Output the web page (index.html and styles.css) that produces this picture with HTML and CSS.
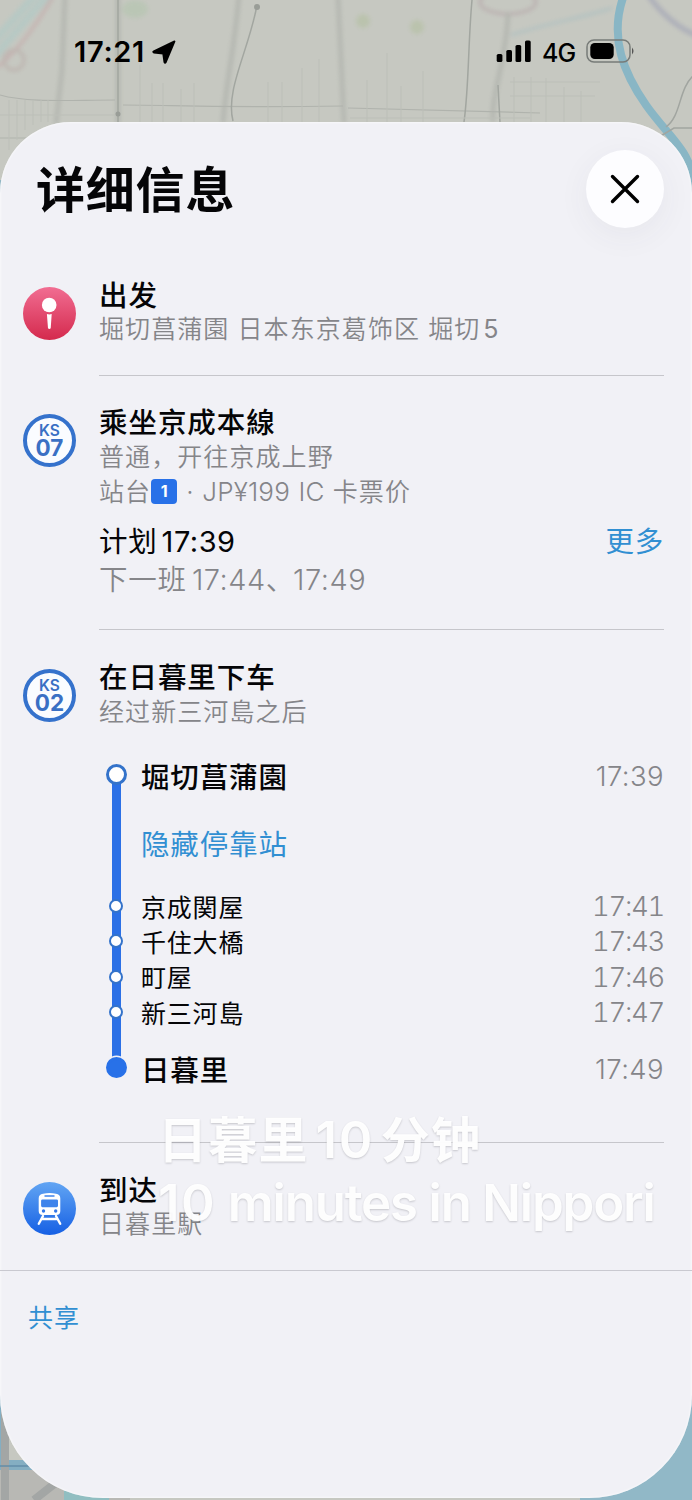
FILE: index.html
```html
<!DOCTYPE html>
<html lang="zh-CN">
<head>
<meta charset="utf-8">
<meta name="viewport" content="width=device-width">
<title>详细信息</title>
<link rel="stylesheet" href="styles.css">
</head>
<body>
<main class="phone">
  <svg class="map" viewBox="0 0 692 1500" fill="none" aria-hidden="true">
    <rect width="692" height="1500" fill="#c6c8c1"/>
    <g class="soft">
      <path d="M-5 40 40-10M-5 56 48-5" stroke="#b4c9c5" stroke-width="8"/>
      <path d="M-4 68C18 52 37 24 54-5" stroke="#c5abab" stroke-width="3"/>
      <circle cx="14" cy="60" r="10" stroke="#bbb0ac" stroke-width="3"/>
      <ellipse cx="135" cy="9" rx="13" ry="9" fill="#b8c6b3"/>
      <circle cx="363" cy="21" r="7" fill="#b8c2a9"/><circle cx="417" cy="27" r="7" fill="#b8c2a9"/>
      <ellipse cx="508" cy="2" rx="28" ry="12" stroke="#b7a9ab" stroke-width="3"/>
      <path d="M511 35C545 24 585 17 612 8" stroke="#aec0c1" stroke-width="3"/>
      <path d="M648-5C661 13 677 28 698 36" stroke="#a6a8b7" stroke-width="5"/>
      <path d="M65-5 62 70 56 124M118-5v129M239-5C235 45 225 90 223 123M338-5 344 123M508 13c-1 45-17 80-15 109" stroke="#adb0aa" stroke-width="4"/>
    </g>
    <path d="M0 95c28 8 70 5 115 5m8 5c50 0 90 3 220 1m5 2 192 5M0 138h35" stroke="#b0b3ad" stroke-width="1.2"/>
    <path d="M118 0v122M257 5C249 50 225 90 233 121M472 0C468 44 469 86 464 122M498 85l2 38" stroke="#a2a6a0" stroke-width="1.5"/>
    <circle cx="257" cy="7" r="3" fill="#999d97"/><circle cx="118" cy="114" r="2.5" fill="#999d97"/>
    <path d="M0 115h115M9 100v50m8-50v40m8-40v30m8-30v25m8-25v22m7-22v22M140 65v58m12-40v40m11-40v40m18-34v34m13-40v40M268 82v40m14-40v40m20-54v54m17-63v63M367 80v43m20-70v70m14-37v37m22-52v52M514 77v46m17-46v46m15-45v45m18-36v36m17-32v32M350 118l180 0M510 82h90m-90 14h85" stroke="#bcbfb8" stroke-width="1"/>
    <path d="M624-5C608 38 625 75 646 105S688 148 694 180V220" stroke="#89b6c5" stroke-width="8"/>
    <path d="M694 75c-16 14-12 40-28 52M692 128h-18l-15 9" stroke="#a1a5a0" stroke-width="1.5"/>
    <path d="M0 1340v160h130v-30H0" fill="#b8b8b4"/><path d="M0 1350h7v110h27v10H0z" fill="#84aec2"/>
    <path d="M5 1500v-145M34 1500l38-30" stroke="#a3a6a5" stroke-width="8"/><path d="M0 1466h30" stroke="#628da9" stroke-width="1.5"/>
    <path d="M0 180h2v40H0z" fill="#92b7c4"/><path d="M64 1490h45v10H64z" fill="#91bec1"/><path d="M580 1340h112v160H580z" fill="#91b8c7"/>
  </svg>

  <header class="status">
    <div class="clock">17:21
      <svg width="26" height="26" viewBox="0 0 26 26" aria-hidden="true"><path d="M23.500 2.400 14.700 23.300q-.6 1.300-1.300-.1l-1.200-8.600-9.400-1.100q-1.300-.7 0-1.300Z" fill="#000" stroke="#000" stroke-width="1.800" stroke-linejoin="round"/></svg>
    </div>
    <div class="radio">
      <svg width="36" height="24" viewBox="0 0 36 24" aria-hidden="true"><rect x=".7" y="15" width="5.700" height="8" rx="1.600"/><rect x="10.300" y="11" width="5.700" height="12" rx="1.600"/><rect x="19.500" y="6" width="5.700" height="17" rx="1.600"/><rect x="29" y="1.500" width="5.700" height="21.500" rx="1.600"/></svg>
      <span class="net">4G</span>
      <svg width="50" height="24" viewBox="0 0 50 24" aria-hidden="true"><rect x="1" y="1" width="43" height="22" rx="7" fill="none" stroke="#777b78" stroke-width="1.500"/><rect x="4.300" y="4" width="23.400" height="16" rx="4.500"/><path d="M46 8.500q3 3.500 0 7Z" fill="#555"/></svg>
    </div>
  </header>

  <section class="sheet">
    <div class="head">
      <h1>详细信息</h1>
      <button class="close" aria-label="关闭"><svg width="30" height="30" viewBox="0 0 30 30"><path d="m2.500 2.500 25 25m0-25-25 25" stroke="#000" stroke-width="3.400" stroke-linecap="round"/></svg></button>
    </div>

    <article class="step depart">
      <svg class="badge" viewBox="0 0 53 53" aria-hidden="true"><defs><linearGradient id="red" x2="0" y2="1"><stop stop-color="#f16d92"/><stop offset="1" stop-color="#d42a4d"/></linearGradient></defs><circle cx="26.500" cy="26.500" r="26.500" fill="url(#red)"/><circle cx="26.200" cy="18" r="7.300" fill="#fff"/><path d="M23.900 27q2.500.8 4.800 0l-1 14.300q-1.300 1.500-2.700 0Z" fill="#fff"/></svg>
      <div class="body"><h2>出发</h2><p>堀切菖蒲園 日本东京葛饰区 堀切<span class="thin">5</span></p></div>
    </article>

    <article class="step ride">
      <div class="badge code"><small>KS</small><b>07</b></div>
      <div class="body">
        <h2>乘坐京成本線</h2>
        <p>普通，开往京成上野</p>
        <p class="fare">站台<span class="platform">1</span><span class="latin">· JP¥199 IC</span> 卡票价</p>
        <div class="plan"><span>计划<i>17:39</i></span><a>更多</a></div>
        <div class="next">下一班<i>17:44</i>、<i class="tight">17:49</i></div>
      </div>
    </article>

    <article class="step alight">
      <div class="badge code"><small>KS</small><b>02</b></div>
      <div class="body">
        <h2>在日暮里下车</h2>
        <p>经过新三河島之后</p>
        <ol class="stops">
          <li class="end first"><span>堀切菖蒲園</span><time>17:39</time></li>
          <li class="toggle"><a>隐藏停靠站</a></li>
          <li><span>京成関屋</span><time>17:41</time></li>
          <li><span>千住大橋</span><time>17:43</time></li>
          <li><span>町屋</span><time>17:46</time></li>
          <li><span>新三河島</span><time>17:47</time></li>
          <li class="end last"><span>日暮里</span><time>17:49</time></li>
        </ol>
      </div>
    </article>

    <article class="step arrive">
      <svg class="badge" viewBox="0 0 53 53" aria-hidden="true"><defs><linearGradient id="blue" x2="0" y2="1"><stop stop-color="#62a5f3"/><stop offset="1" stop-color="#1660e4"/></linearGradient></defs><circle cx="26.500" cy="26.500" r="26.500" fill="url(#blue)"/><path d="M20 11.800q6.500-1.600 13 0 4.300.5 4.300 4.700V29q0 4-4 4H19.700q-4 0-4-4V16.500q0-4.200 4.300-4.700Z" fill="#fff"/><path d="M21.500 13.200h10v1.500h-10zM19.500 17.500h14.200q1.300 0 1.300 1.300v5q0 1.400-1.400 1.400H19.500q-1.400 0-1.400-1.400v-5q0-1.300 1.400-1.300Z" fill="#3f84eb"/><circle cx="20.500" cy="29" r="1.700" fill="#3277e8"/><circle cx="32.700" cy="29" r="1.700" fill="#3277e8"/><path d="m20 34-4.200 7.800M33 34l4.200 7.800M19 37h15.500" stroke="#fff" stroke-width="2.400" stroke-linecap="round"/></svg>
      <div class="body"><h2>到达</h2><p>日暮里駅</p></div>
    </article>

    <footer class="share"><a>共享</a></footer>
  </section>

  <div class="caption"><div class="zh">日暮里<i>10</i>分钟</div><div class="en"><i>10</i> minutes in Nippori</div></div>
</main>
</body>
</html>
```
FILE: styles.css
```css
*, ::before, ::after { box-sizing: border-box; }
body { margin: 0; font-family: Inter, "Noto Sans CJK SC", sans-serif; color: #050507; }
h1, h2, p, ol { margin: 0; padding: 0; font-weight: 400; }
i { font-style: normal; }
a { color: #318fd2; }
.phone { position: relative; width: 692px; height: 1500px; overflow: hidden; }
.map { position: absolute; inset: 0; width: 692px; height: 1500px; }
.soft { filter: blur(2px); opacity: .8; }

.status { position: relative; height: 122px; display: flex; justify-content: space-between; padding: 38px 56px 0 74px; }
.clock { height: 28px; display: flex; align-items: center; gap: 6px; font-size: 29px; font-weight: 600; line-height: 28px; letter-spacing: .7px; color: #000; }
.radio { height: 26px; display: flex; align-items: center; }
.net { width: 54px; padding: 3px 0 0 10px; font-size: 25px; font-weight: 500; line-height: 26px; letter-spacing: -1px; color: #000; }

.sheet { position: relative; height: 1376px; background: #f1f1f6; border-radius: 71px 71px 103px 103px; overflow: hidden; box-shadow: inset 0 0 3px #fff; }
.head { height: 127px; display: flex; justify-content: space-between; align-items: flex-start; padding: 28px 28px 0 36px; }
h1 { font-size: 49px; font-weight: 700; line-height: 82px; letter-spacing: .8px; }
.close { width: 78px; height: 78px; border: 0; padding: 0; border-radius: 50%; background: #fdfdff; display: grid; place-items: center; box-shadow: 0 8px 32px rgba(60,60,90,.06); }

.step { display: flex; padding: 0 28px 0 23px; }
.badge { flex: none; width: 53px; height: 53px; margin: 38px 23px 0 0; }
.code { border: 4px solid #3572cc; border-radius: 50%; background: #fafcff; color: #3a70c4; display: flex; flex-direction: column; align-items: center; padding-top: 4px; }
.code small { font-size: 15.500px; line-height: 17px; font-weight: 600; }
.code b { font-size: 22.500px; line-height: 18px; font-weight: 700; }
.body { flex: 1; border-top: 1px solid #c6c6cb; padding-top: 30px; white-space: nowrap; }
.depart .body { border-color: transparent; padding-top: 29px; }
.depart p { margin-top: -1px; }
.depart { height: 126px; }
.ride { height: 254px; }
.ride .badge { margin-top: 39px; }
.alight { height: 513px; }
.alight .badge { margin-top: 40px; }
.alight .body { padding-top: 31px; }
.arrive { height: 128px; }
.arrive .badge { margin-top: 40px; }
.arrive .body { padding-top: 31px; }
.arrive p { margin-top: -1px; }
h2 { font-size: 28.500px; font-weight: 500; line-height: 34px; letter-spacing: .950px; }
p { font-size: 25px; line-height: 34px; letter-spacing: 1.080px; color: #858589; font-weight: 350; }
.thin { margin-left: 3px; font-weight: 400; }
.fare { display: flex; align-items: center; height: 35px; }
.platform { width: 26px; height: 25px; border-radius: 4px; background: #2871e8; color: #fff; font-size: 16px; font-weight: 700; line-height: 25px; letter-spacing: 0; text-align: center; }
.latin { font-size: 26px; letter-spacing: .2px; margin: 0 8px 0 9px; word-spacing: 1px; }
.plan, .next { font-size: 28.500px; line-height: 38px; letter-spacing: .800px; }
.plan { display: flex; justify-content: space-between; margin-top: 14px; }
.plan i, .next i { font-size: 29px; margin-left: 4px; letter-spacing: .5px; }
.next i { margin-left: 5px; }
.next .tight { margin-left: -2px; }
.next { color: #858589; font-weight: 350; }

.stops { position: relative; list-style: none; margin-top: 28px; }
.stops::before { content: ""; position: absolute; left: 12.500px; top: 17px; width: 9px; height: 284px; background: #2b70e6; }
.stops li { position: relative; height: 35.300px; padding-left: 42px; display: flex; justify-content: space-between; align-items: center; font-size: 25px; letter-spacing: .8px; }
.stops li::before { content: ""; position: absolute; left: 10px; top: 11px; width: 14px; height: 14px; border: 2.500px solid #3473ca; border-radius: 50%; background: #fff; }
.stops time { padding-top: 1px; font-size: 27.500px; letter-spacing: -1.300px; font-variant-numeric: tabular-nums; color: #858589; font-weight: 350; }
.stops .end time { letter-spacing: .4px; font-variant-numeric: normal; padding-top: 2px; }
.stops .end { height: 36px; font-size: 28.500px; font-weight: 500; letter-spacing: .850px; }
.stops .end::before { left: 6.500px; top: 6.500px; width: 21px; height: 21px; border-width: 3px; }
.stops .toggle { height: 95px; font-size: 28.500px; letter-spacing: .850px; padding-top: 4px; }
.stops .toggle::before { display: none; }
.stops .last { margin-top: 21px; padding-left: 42px; }
.stops .last::before { background: #2871e8; border-color: #2871e8; box-shadow: 0 0 0 1.500px #f1f1f6; }

.share { border-top: 1px solid #c9c9d0; padding: 30px 28px; font-size: 25px; line-height: 34px; letter-spacing: 1px; }

.caption { position: absolute; left: 158px; top: 1108px; color: rgba(255,255,255,.96); font-weight: 600; white-space: nowrap; text-shadow: 0 1px 2px rgba(50,50,60,.22); }
.caption div { height: 63px; line-height: 63px; }
.zh { font-size: 49px; letter-spacing: 1.200px; }
.zh i { font-size: 51px; letter-spacing: 1.500px; margin: 0 7px 0 7px; }
.en { font-size: 51px; letter-spacing: -1.200px; }
.en i { letter-spacing: 1.500px; }
```
